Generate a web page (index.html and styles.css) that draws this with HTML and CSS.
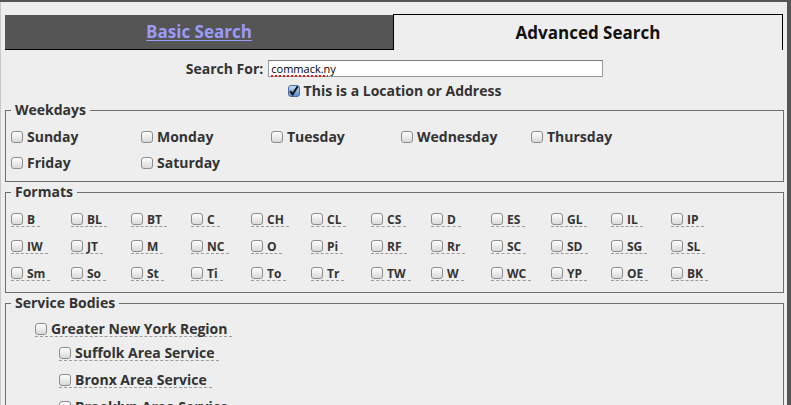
FILE: index.html
```html
<!DOCTYPE html>
<html lang="en">
<head>
<meta charset="utf-8">
<title>Advanced Search</title>
<link rel="stylesheet" href="styles.css">
</head>
<body>
<div class="page">
  <div class="tabs">
    <div class="tab tab-basic"><a href="#">Basic Search</a></div>
    <div class="tab tab-adv">Advanced Search</div>
  </div>

  <div class="search-row">
    <span class="search-label">Search For:</span>
    <div class="search-input"><span class="spell">commack.ny</span></div>
  </div>
  <div class="loc-row">
    <label class="opt"><input type="checkbox" class="cb" checked><span>This is a Location or Address</span></label>
  </div>

  <fieldset class="box">
    <legend>Weekdays</legend>
    <div class="days">
      <label class="opt"><input type="checkbox" class="cb"><span>Sunday</span></label>
      <label class="opt"><input type="checkbox" class="cb"><span>Monday</span></label>
      <label class="opt"><input type="checkbox" class="cb"><span>Tuesday</span></label>
      <label class="opt"><input type="checkbox" class="cb"><span>Wednesday</span></label>
      <label class="opt"><input type="checkbox" class="cb"><span>Thursday</span></label>
      <label class="opt"><input type="checkbox" class="cb"><span>Friday</span></label>
      <label class="opt"><input type="checkbox" class="cb"><span>Saturday</span></label>
    </div>
  </fieldset>

  <fieldset class="box">
    <legend>Formats</legend>
    <div class="formats">
      <div class="cell"><label class="fmt"><input type="checkbox" class="cb"><span>B</span></label></div>
      <div class="cell"><label class="fmt"><input type="checkbox" class="cb"><span>BL</span></label></div>
      <div class="cell"><label class="fmt"><input type="checkbox" class="cb"><span>BT</span></label></div>
      <div class="cell"><label class="fmt"><input type="checkbox" class="cb"><span>C</span></label></div>
      <div class="cell"><label class="fmt"><input type="checkbox" class="cb"><span>CH</span></label></div>
      <div class="cell"><label class="fmt"><input type="checkbox" class="cb"><span>CL</span></label></div>
      <div class="cell"><label class="fmt"><input type="checkbox" class="cb"><span>CS</span></label></div>
      <div class="cell"><label class="fmt"><input type="checkbox" class="cb"><span>D</span></label></div>
      <div class="cell"><label class="fmt"><input type="checkbox" class="cb"><span>ES</span></label></div>
      <div class="cell"><label class="fmt"><input type="checkbox" class="cb"><span>GL</span></label></div>
      <div class="cell"><label class="fmt"><input type="checkbox" class="cb"><span>IL</span></label></div>
      <div class="cell"><label class="fmt"><input type="checkbox" class="cb"><span>IP</span></label></div>

      <div class="cell"><label class="fmt"><input type="checkbox" class="cb"><span>IW</span></label></div>
      <div class="cell"><label class="fmt"><input type="checkbox" class="cb"><span>JT</span></label></div>
      <div class="cell"><label class="fmt"><input type="checkbox" class="cb"><span>M</span></label></div>
      <div class="cell"><label class="fmt"><input type="checkbox" class="cb"><span>NC</span></label></div>
      <div class="cell"><label class="fmt"><input type="checkbox" class="cb"><span>O</span></label></div>
      <div class="cell"><label class="fmt"><input type="checkbox" class="cb"><span>Pi</span></label></div>
      <div class="cell"><label class="fmt"><input type="checkbox" class="cb"><span>RF</span></label></div>
      <div class="cell"><label class="fmt"><input type="checkbox" class="cb"><span>Rr</span></label></div>
      <div class="cell"><label class="fmt"><input type="checkbox" class="cb"><span>SC</span></label></div>
      <div class="cell"><label class="fmt"><input type="checkbox" class="cb"><span>SD</span></label></div>
      <div class="cell"><label class="fmt"><input type="checkbox" class="cb"><span>SG</span></label></div>
      <div class="cell"><label class="fmt"><input type="checkbox" class="cb"><span>SL</span></label></div>

      <div class="cell"><label class="fmt"><input type="checkbox" class="cb"><span>Sm</span></label></div>
      <div class="cell"><label class="fmt"><input type="checkbox" class="cb"><span>So</span></label></div>
      <div class="cell"><label class="fmt"><input type="checkbox" class="cb"><span>St</span></label></div>
      <div class="cell"><label class="fmt"><input type="checkbox" class="cb"><span>Ti</span></label></div>
      <div class="cell"><label class="fmt"><input type="checkbox" class="cb"><span>To</span></label></div>
      <div class="cell"><label class="fmt"><input type="checkbox" class="cb"><span>Tr</span></label></div>
      <div class="cell"><label class="fmt"><input type="checkbox" class="cb"><span>TW</span></label></div>
      <div class="cell"><label class="fmt"><input type="checkbox" class="cb"><span>W</span></label></div>
      <div class="cell"><label class="fmt"><input type="checkbox" class="cb"><span>WC</span></label></div>
      <div class="cell"><label class="fmt"><input type="checkbox" class="cb"><span>YP</span></label></div>
      <div class="cell"><label class="fmt"><input type="checkbox" class="cb"><span>OE</span></label></div>
      <div class="cell"><label class="fmt"><input type="checkbox" class="cb"><span>BK</span></label></div>
    </div>
  </fieldset>

  <fieldset class="box box-svc">
    <legend>Service Bodies</legend>
    <ul class="tree">
      <li class="region">
        <div class="node"><label class="svc"><input type="checkbox" class="cb"><span>Greater New York Region</span></label></div>
        <ul class="subtree">
          <li class="node"><label class="svc"><input type="checkbox" class="cb"><span>Suffolk Area Service</span></label></li>
          <li class="node"><label class="svc"><input type="checkbox" class="cb"><span>Bronx Area Service</span></label></li>
          <li class="node"><label class="svc"><input type="checkbox" class="cb"><span>Brooklyn Area Service</span></label></li>
        </ul>
      </li>
    </ul>
  </fieldset>
</div>
</body>
</html>
```

FILE: styles.css
```css
html {
  background: #555555;
  height: 100%;
}
body {
  margin: 0;
  font-family: "Open Sans", "DejaVu Sans", sans-serif;
  color: #333333;
  overflow: hidden;
}
.page {
  margin: 2px 4px 0 0;
  min-height: 100vh;
  background: #eeeeee;
  border-left: 1px solid #c8c8c8;
  padding: 12px 3px 0 4px;
  box-sizing: border-box;
}

/* Tabs */
.tabs {
  display: flex;
  margin-right: 1px;
  height: 36px;
}
.tab {
  flex: 1 1 0;
  text-align: center;
  font-weight: 700;
  font-size: 17px;
  box-sizing: border-box;
}
.tab-basic {
  margin-top: 1px;
  height: 35px;
  line-height: 33px;
  background: #555555;
  border-bottom: 1px solid #000;
}
.tab-basic a {
  color: #9b9bf7;
  text-decoration: underline;
  text-underline-offset: 2px;
}
.tab-adv {
  height: 36px;
  line-height: 35px;
  border: 1px solid #000;
  border-bottom: none;
  color: #111;
}

/* search */
.search-row {
  margin-top: 10px;
  display: flex;
  justify-content: center;
  align-items: center;
  gap: 5px;
  height: 17px;
}
.search-label {
  font-weight: 700;
  font-size: 14px;
  line-height: 17px;
}
.search-input {
  width: 335px;
  height: 17px;
  box-sizing: border-box;
  background: #fff;
  border: 1px solid #9a9a9a;
  border-top-color: #7a7a7a;
  font-size: 11px;
  line-height: 15px;
  padding-left: 2px;
  color: #000;
}
.spell {
  text-decoration: underline dotted #e02020;
  text-decoration-thickness: 2px;
  text-underline-offset: 2px;
}
.loc-row {
  margin-top: 4px;
  height: 19px;
  display: flex;
  justify-content: center;
  align-items: center;
}

/* checkbox */
.cb {
  appearance: none;
  -webkit-appearance: none;
  flex: none;
  width: 12px;
  height: 12px;
  margin: 0;
  box-sizing: border-box;
  border: 1px solid #8c8c8c;
  border-radius: 3px;
  background: linear-gradient(#fefefe, #d9d9d9);
}
.cb:checked {
  border-color: #4a6f9c;
  background-image: url("data:image/svg+xml,%3Csvg xmlns='http://www.w3.org/2000/svg' viewBox='0 0 12 12'%3E%3Cpath d='M2.2 6.2 L4.6 9.3 L9.8 1.2' fill='none' stroke='%23111' stroke-width='2'/%3E%3C/svg%3E"), linear-gradient(#c3dbf6, #5a90d4);
  background-size: 12px 12px, 100% 100%;
  background-position: -1px -1px, 0 0;
  background-repeat: no-repeat;
}

.opt {
  display: inline-flex;
  align-items: center;
  gap: 4px;
  font-weight: 700;
  font-size: 14px;
  line-height: 18px;
}

/* fieldsets */
.box {
  margin: 0;
  padding: 4px 5px 5px;
  border: 1px solid #6e6e6e;
  min-inline-size: 0;
}
.box legend {
  padding: 0 4px;
  font-weight: 700;
  font-size: 14px;
  line-height: 20px;
  color: #333;
}

.days {
  display: grid;
  grid-template-columns: repeat(5, 130px);
  grid-auto-rows: 26px;
  align-items: center;
}

.formats {
  display: grid;
  grid-template-columns: repeat(12, 60px);
  grid-auto-rows: 27px;
  align-items: center;
}
.cell {
  display: flex;
}
.fmt {
  display: inline-flex;
  align-items: center;
  gap: 4px;
  padding-right: 5px;
  font-weight: 700;
  font-size: 12px;
  line-height: 13px;
  border-bottom: 1px dashed #9c9c9c;
}

.box-svc {
  padding-top: 5px;
}
.tree, .subtree {
  list-style: none;
  margin: 0;
  padding: 0;
}
.tree {
  padding-left: 24px;
}
.subtree {
  padding-left: 24px;
}
.region > .node {
  height: 22px;
  display: flex;
  align-items: center;
}
.subtree > .node {
  height: 27px;
  display: flex;
  align-items: center;
}
.svc {
  display: inline-flex;
  align-items: center;
  gap: 4px;
  padding-right: 5px;
  font-weight: 700;
  font-size: 14px;
  line-height: 14px;
  border-bottom: 1px dashed #9c9c9c;
}
```
